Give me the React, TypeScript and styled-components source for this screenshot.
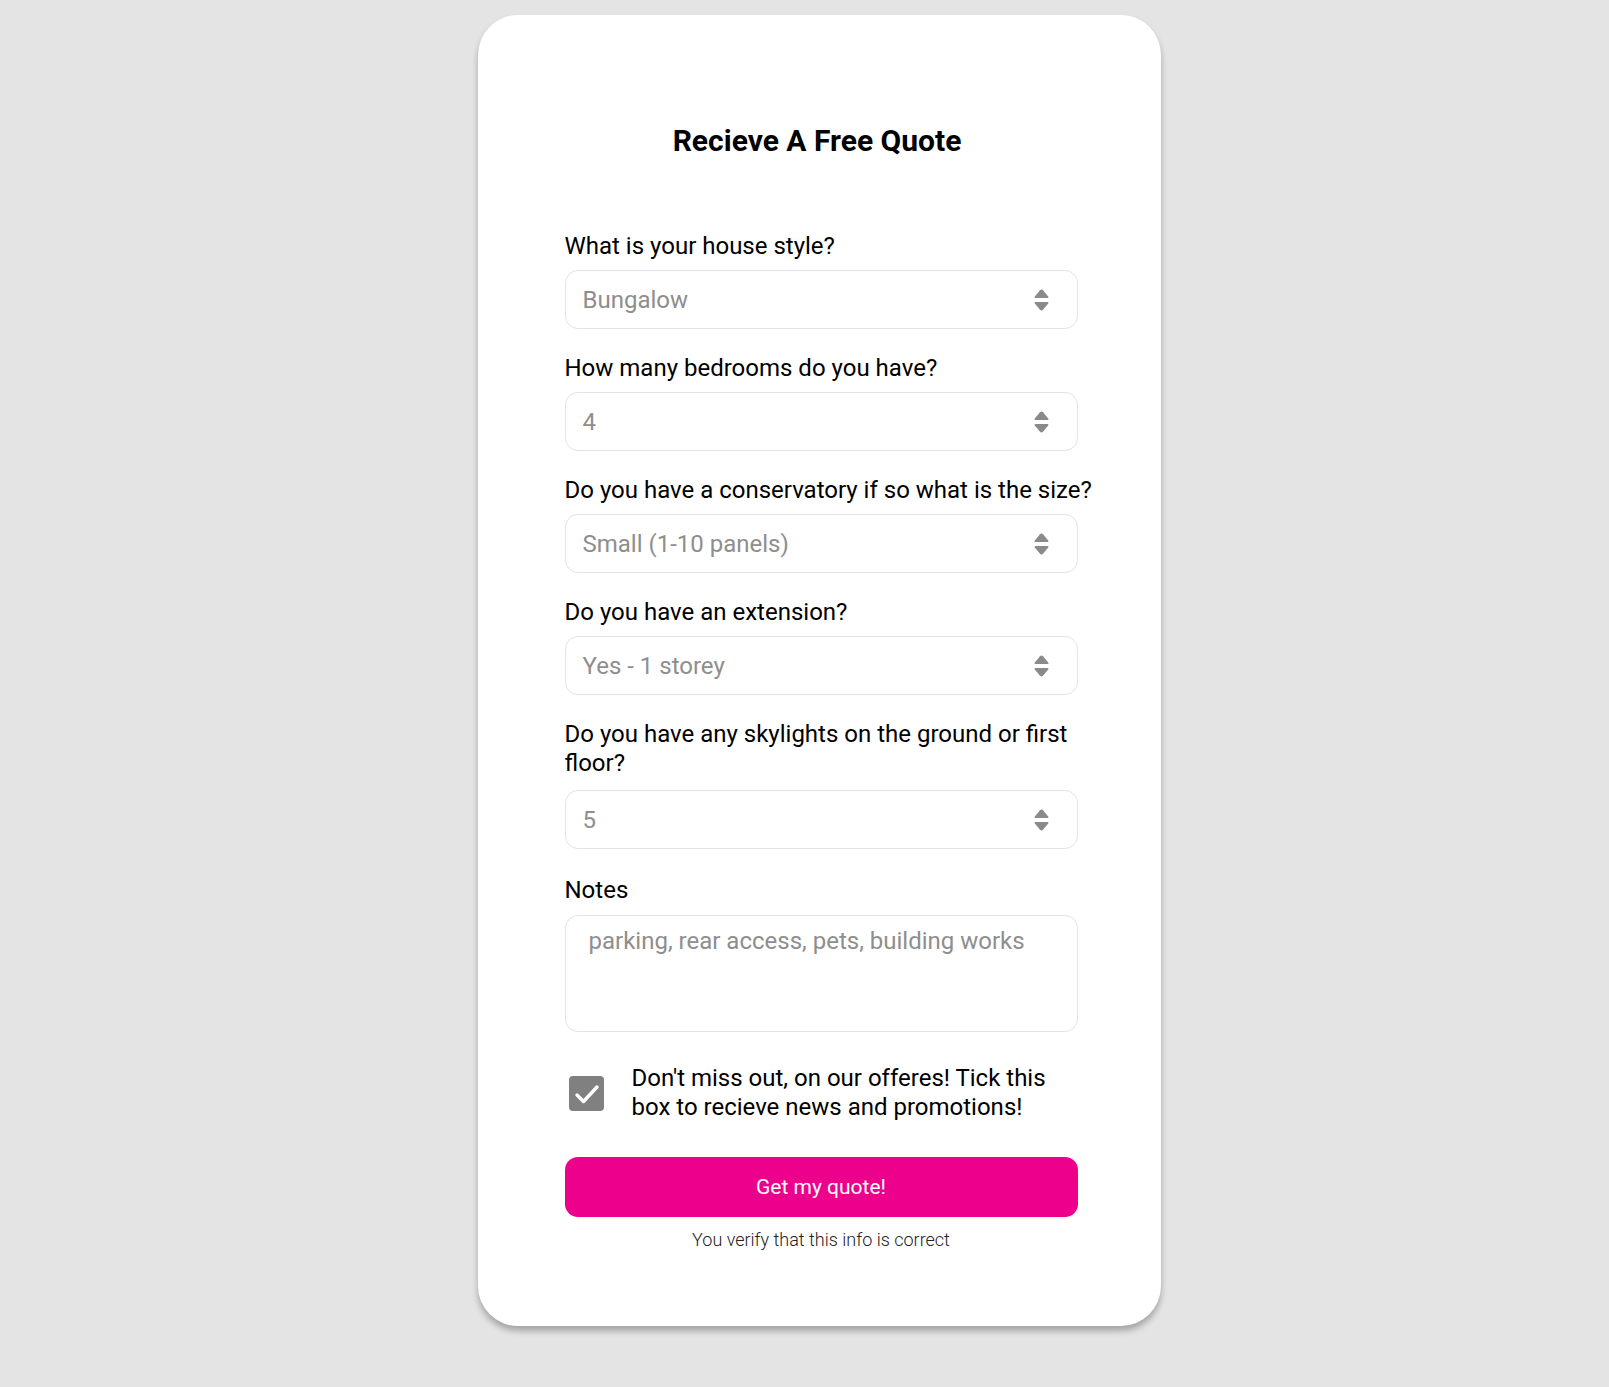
import * as React from 'react';
import styled, { createGlobalStyle } from 'styled-components';

const GlobalStyle = createGlobalStyle`
  html, body {
    margin: 0;
    padding: 0;
    background: #e4e4e4;
    font-family: Roboto, "Noto Sans", Arial, sans-serif;
  }
`;

const Wrapper = styled.div`
  min-height: 1387px;
  display: flex;
  justify-content: center;
  align-items: flex-start;
  padding: 15px 0 0 29px;
  box-sizing: border-box;
`;

const Card = styled.div`
  width: 683px;
  height: 1311px;
  box-sizing: border-box;
  padding: 107px 83px 0 87px;
  background: white;
  border-radius: 40px;
  box-shadow: 0 5px 6px rgba(0, 0, 0, 0.28);
`;

const Title = styled.h1`
  margin: 0 0 72px;
  padding-right: 8px;
  text-align: center;
  font-size: 30px;
  font-weight: 700;
  line-height: 38px;
  color: #000;
`;

const Field = styled.div<{ $gap?: number }>`
  display: flex;
  flex-direction: column;
  gap: ${(p) => p.$gap ?? 9}px;
  margin-bottom: 25px;
`;

const NotesField = styled(Field)`
  padding-top: 2px;
`;

const Label = styled.label`
  font-size: 24px;
  line-height: 29px;
  color: #000;
  width: 540px;
`;

const SelectBox = styled.div`
  width: 513px;
  height: 59px;
  box-sizing: border-box;
  border: 1.5px solid #e2e2ee;
  border-radius: 13px;
  display: flex;
  align-items: center;
  justify-content: space-between;
  padding: 0 28px 0 17px;
  font-size: 24px;
  color: #8e8e8e;
`;

const NotesBox = styled.div`
  width: 513px;
  height: 117px;
  box-sizing: border-box;
  border: 1.5px solid #e2e2ee;
  border-radius: 13px;
  padding: 11px 23px;
  font-size: 24px;
  line-height: 29px;
  color: #8e8e8e;
`;

const CheckRow = styled.div`
  display: flex;
  align-items: center;
  gap: 28px;
  margin: 32px 0 35px;
  padding-left: 4px;
`;

const CheckBox = styled.div`
  width: 35px;
  height: 35px;
  flex-shrink: 0;
  border-radius: 4px;
  background: #808080;
  display: flex;
  align-items: center;
  justify-content: center;
`;

const CheckText = styled.div`
  font-size: 24px;
  line-height: 29px;
  color: #000;
  width: 440px;
`;

const Button = styled.button`
  width: 513px;
  height: 60px;
  border: none;
  border-radius: 13px;
  background: #ec008c;
  color: white;
  font-family: inherit;
  font-size: 21px;
  cursor: pointer;
`;

const Verify = styled.div`
  width: 513px;
  margin-top: 12px;
  text-align: center;
  font-size: 18px;
  font-weight: 300;
  color: #222;
`;

const Arrows = () => (
  <svg width="15" height="22" viewBox="0 0 15 22" fill="#8a8a8a">
    <path d="M6 1.2 Q7.5 -0.2 9 1.2 L14.2 7.6 Q15 9 13.4 9 L1.6 9 Q0 9 0.8 7.6 Z" />
    <path d="M6 20.8 Q7.5 22.2 9 20.8 L14.2 14.4 Q15 13 13.4 13 L1.6 13 Q0 13 0.8 14.4 Z" />
  </svg>
);

const Check = () => (
  <svg width="35" height="35" viewBox="0 0 35 35" fill="none">
    <path d="M8 19 L14.5 25.5 L28 11" stroke="white" strokeWidth="3.4" strokeLinecap="round" strokeLinejoin="round" />
  </svg>
);

const fields: { label: string; value: string; gap?: number }[] = [
  { label: 'What is your house style?', value: 'Bungalow' },
  { label: 'How many bedrooms do you have?', value: '4' },
  { label: 'Do you have a conservatory if so what is the size?', value: 'Small (1-10 panels)' },
  { label: 'Do you have an extension?', value: 'Yes - 1 storey' },
  { label: 'Do you have any skylights on the ground or first floor?', value: '5', gap: 12 },
];

export default function App() {
  return (
    <>
      <GlobalStyle />
      <Wrapper>
        <Card>
          <Title>Recieve A Free Quote</Title>
          {fields.map((f) => (
            <Field key={f.label} $gap={f.gap}>
              <Label>{f.label}</Label>
              <SelectBox>
                <span>{f.value}</span>
                <Arrows />
              </SelectBox>
            </Field>
          ))}
          <NotesField $gap={10}>
            <Label>Notes</Label>
            <NotesBox>parking, rear access, pets, building works</NotesBox>
          </NotesField>
          <CheckRow>
            <CheckBox>
              <Check />
            </CheckBox>
            <CheckText>Don't miss out, on our offeres! Tick this box to recieve news and promotions!</CheckText>
          </CheckRow>
          <Button>Get my quote!</Button>
          <Verify>You verify that this info is correct</Verify>
        </Card>
      </Wrapper>
    </>
  );
}
